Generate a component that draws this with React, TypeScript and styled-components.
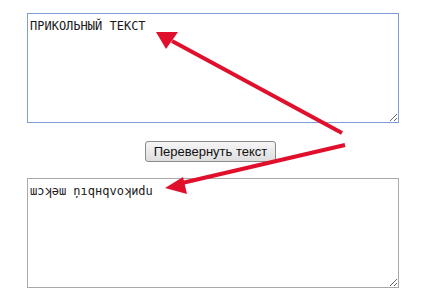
import React, { useState } from "react";
import styled, { createGlobalStyle } from "styled-components";

const GlobalStyle = createGlobalStyle`
  html, body {
    margin: 0;
    padding: 0;
    background: #fff;
  }
  body {
    font-family: "Liberation Sans", Arial, sans-serif;
  }
`;

const Page = styled.div`
  position: relative;
  width: 432px;
  height: 299px;
  overflow: hidden;
`;

const Form = styled.div`
  display: flex;
  flex-direction: column;
  align-items: center;
  width: 372px;
  padding: 13px 0 0 27px;
`;

const TextBox = styled.textarea<{ $focused?: boolean }>`
  box-sizing: border-box;
  width: 372px;
  height: 110px;
  margin: 0;
  padding: 5px 2px;
  border: 1px solid ${(p) => (p.$focused ? "#7f9ed6" : "#a9a9a9")};
  border-radius: 0;
  outline: none;
  font-family: "DejaVu Sans Mono", "Liberation Mono", monospace;
  font-size: 12px;
  line-height: 14px;
  color: #1a1a1a;
  background: #fff;
  resize: both;
`;

const FlipButton = styled.button`
  margin: 18px 0 16px -5px;
  height: 21px;
  padding: 0 8px;
  border: 1px solid #8a8a8a;
  border-radius: 3px;
  background: linear-gradient(#f6f6f6, #dedede);
  font-family: "Liberation Sans", Arial, sans-serif;
  font-size: 13px;
  color: #111;
  cursor: pointer;
`;

const Overlay = styled.svg`
  position: absolute;
  left: 0;
  top: 0;
  pointer-events: none;
`;

const source = "ПРИКОЛЬНЫЙ ТЕКСТ";
const flipped = "ɯɔʞǝɯ ņıqнqvоʞиdu";

export default function App() {
  const [input, setInput] = useState(source);
  const [output, setOutput] = useState(flipped);

  return (
    <Page>
      <GlobalStyle />
      <Form>
        <TextBox $focused value={input} onChange={(e) => setInput(e.target.value)} />
        <FlipButton onClick={() => setOutput(flipped)}>Перевернуть текст</FlipButton>
        <TextBox value={output} onChange={(e) => setOutput(e.target.value)} />
      </Form>
      <Overlay width="432" height="299" viewBox="0 0 432 299">
        <g stroke="#e0102c" strokeWidth="4" strokeLinecap="butt" fill="#e0102c">
          <line x1="342" y1="133" x2="172" y2="41" />
          <polygon points="156,32 178,32 166,49" stroke="none" />
          <line x1="345" y1="145" x2="182" y2="183" />
          <polygon points="165,188 183,177 187,194" stroke="none" />
        </g>
      </Overlay>
    </Page>
  );
}
